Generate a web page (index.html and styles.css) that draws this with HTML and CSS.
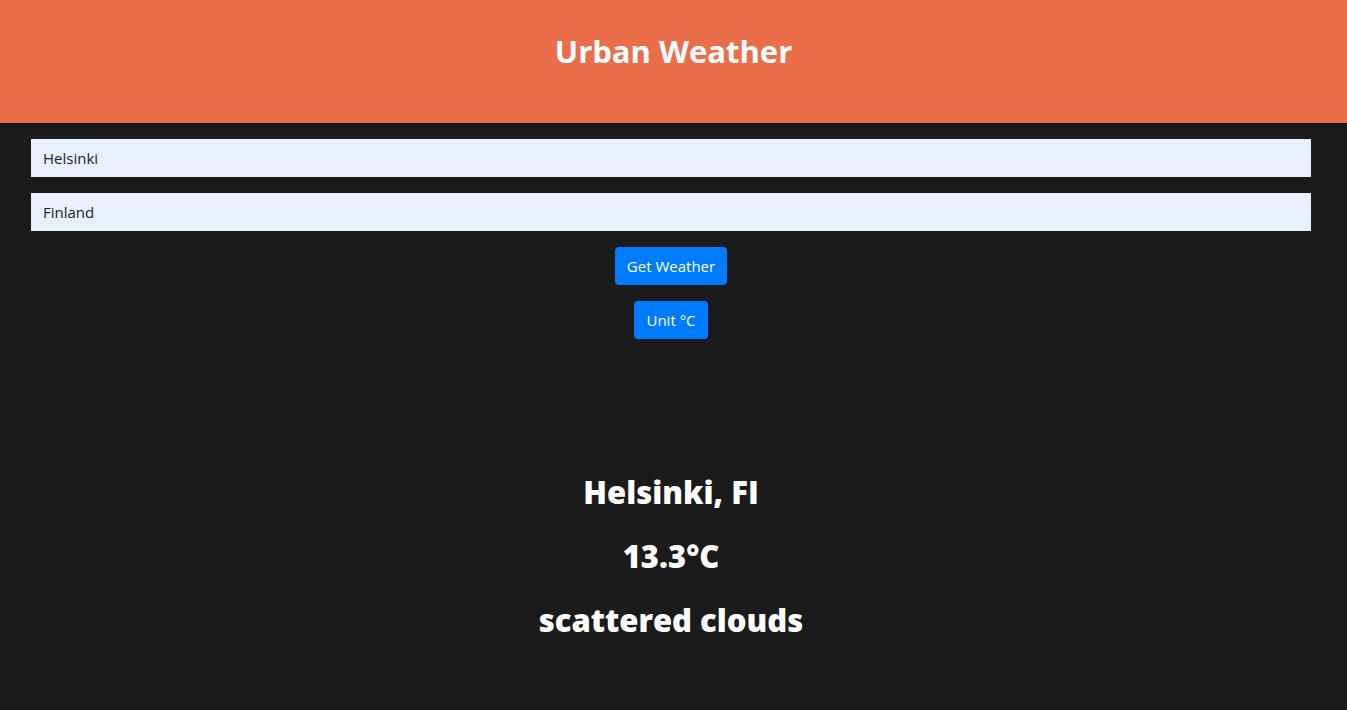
FILE: index.html
```html
<!DOCTYPE html>
<html lang="en">
<head>
<meta charset="utf-8">
<title>Urban Weather</title>
<link rel="stylesheet" href="styles.css">
</head>
<body>
<header class="header">
  <h1 class="title">Urban Weather</h1>
</header>
<main class="main">
  <form class="form">
    <input class="field" type="text" value="Helsinki">
    <input class="field" type="text" value="Finland">
    <button class="btn" type="button">Get Weather</button>
    <button class="btn" type="button">Unit °C</button>
  </form>
  <section class="result">
    <h2 class="line">Helsinki, FI</h2>
    <h2 class="line">13.3°C</h2>
    <h2 class="line">scattered clouds</h2>
  </section>
</main>
</body>
</html>
```

FILE: styles.css
```css
html, body {
  margin: 0;
  padding: 0;
}
body {
  background: #1b1b1b;
  font-family: "Open Sans", "Noto Sans", sans-serif;
  color: #fff;
  height: 710px;
  overflow: hidden;
}
.header {
  background: #eb6e4b;
  height: 123px;
  display: flex;
  align-items: center;
  justify-content: center;
}
.title {
  margin: 0;
  font-size: 31px;
  font-weight: 700;
  color: #fff;
  line-height: 1.2;
  padding-bottom: 20px;
}
.main {
  padding: 16px 36px 0 31px;
}
.form {
  display: flex;
  flex-direction: column;
  align-items: center;
  gap: 16px;
}
.field {
  box-sizing: border-box;
  width: 100%;
  height: 38px;
  border: none;
  background: #e8f0fe;
  color: #212529;
  font-family: inherit;
  font-size: 15px;
  padding: 0 12px;
  outline: none;
}
.btn {
  background: #007bff;
  color: #fff;
  border: none;
  border-radius: 4px;
  height: 38px;
  padding: 0 12px;
  font-family: inherit;
  font-size: 15px;
}
.result {
  padding-top: 134px;
  display: flex;
  flex-direction: column;
  align-items: center;
}
.line {
  margin: 0 0 26px;
  font-size: 31px;
  font-weight: 800;
  line-height: 38px;
}
```
